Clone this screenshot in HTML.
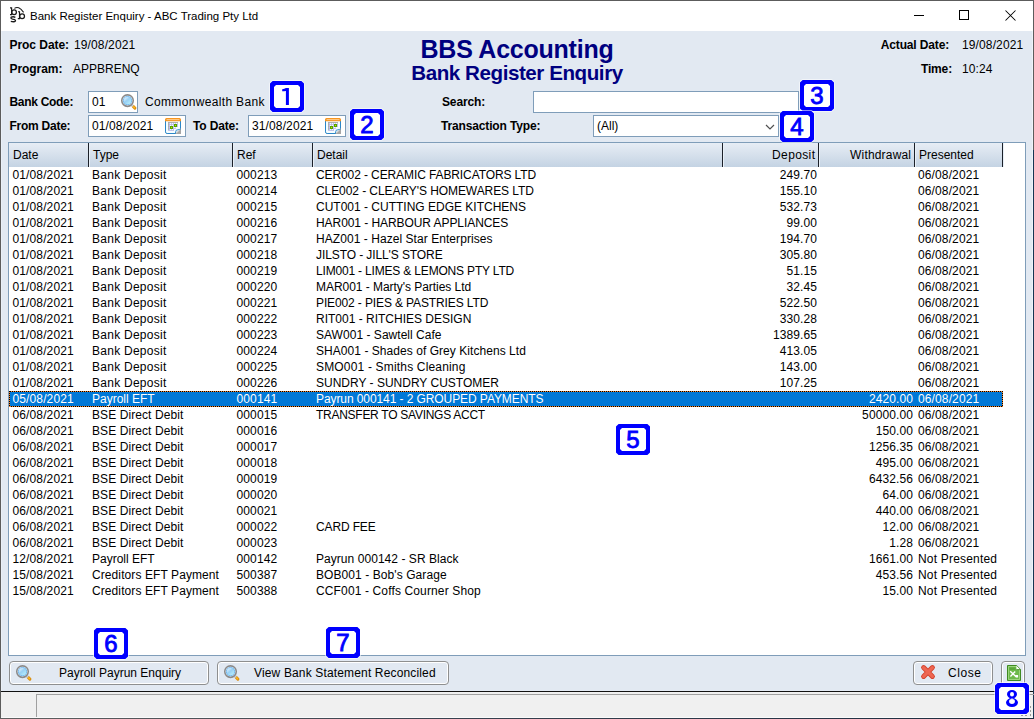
<!DOCTYPE html><html><head><meta charset="utf-8"><style>
*{margin:0;padding:0;box-sizing:border-box}
html,body{width:1034px;height:719px;overflow:hidden;background:#E2E9F2}
body{position:relative;font-family:"Liberation Sans",sans-serif;font-size:12px;color:#000}
.t{position:absolute;white-space:pre;line-height:16px;font-size:12px}
.b{font-weight:bold;letter-spacing:-0.15px}
.r{text-align:right}
.abs{position:absolute}
svg{display:block}
.badge{position:absolute;border:4px solid #0000F0;border-radius:4px;background:#fff;color:#0000F0;font-weight:bold;font-size:23px;line-height:23px;text-align:center;box-shadow:0 0 0 1px rgba(255,255,255,0.7)}
.inp{position:absolute;background:#fff;border:1px solid #7F9DB9}
.btn{position:absolute;border:1px solid #8E8F8F;border-radius:4px;box-shadow:inset 0 0 0 1px #fff;background:#E2E9F2}
</style></head><body>
<div class="abs" style="left:0;top:0;width:1034px;height:31px;background:#fff"></div>
<div class="abs" style="left:0;top:0;width:1034px;height:1px;background:#5C5C5C"></div>
<div class="abs" style="left:0;top:0;width:1px;height:719px;background:#5C5C5C"></div>
<div class="abs" style="left:1px;top:31px;width:1px;height:687px;background:#EAF0F8"></div>
<div class="abs" style="left:1032px;top:31px;width:1px;height:660px;background:#EEF3FA"></div>
<div class="abs" style="left:1033px;top:0;width:1px;height:150px;background:#5C5C5C"></div>
<div class="abs" style="left:1033px;top:150px;width:1px;height:569px;background:#163452"></div>
<svg class="abs" style="left:6px;top:4px" width="24" height="20" viewBox="0 0 24 20" fill="none" stroke="#1a1a1a"><path d="M4 3.9 H5.6 V10.6 H4" stroke-width="1.15"/><ellipse cx="8.1" cy="8.2" rx="2.3" ry="2.35" stroke-width="1.25"/><path d="M8.4 4.4 Q12.5 1.2 17.6 8.4" stroke-width="1.05"/><path d="M12 7.7 H13.5 V14.6 H11.8" stroke-width="1.15"/><ellipse cx="16.1" cy="12.2" rx="2.4" ry="2.35" stroke-width="1.25"/><path d="M9.4 13.3 Q7.2 12.2 5.2 13.2 Q4.3 14.6 6.6 15.1 Q9.7 15.6 9.5 16.8 Q8.6 18.3 4.8 17.4" stroke-width="1.3"/></svg>
<div class="t" style="left:30px;top:8px;font-size:11.5px;line-height:16px;color:#000">Bank Register Enquiry - ABC Trading Pty Ltd</div>
<div class="abs" style="left:914px;top:15px;width:10px;height:1px;background:#000"></div>
<div class="abs" style="left:959px;top:10px;width:10px;height:10px;border:1px solid #000"></div>
<svg class="abs" style="left:1005px;top:10px" width="11" height="11" viewBox="0 0 11 11"><path d="M0.5 0.5 L10.5 10.5 M10.5 0.5 L0.5 10.5" stroke="#000" stroke-width="1.05"/></svg>
<div class="t b" style="left:9.5px;top:37px;letter-spacing:-0.05px;">Proc Date:</div>
<div class="t" style="left:74px;top:37px;letter-spacing:0.12px;">19/08/2021</div>
<div class="t b" style="left:9.5px;top:61px;letter-spacing:-0.06px;">Program:</div>
<div class="t" style="left:73px;top:61px;">APPBRENQ</div>
<div class="t b" style="left:0;width:1034px;text-align:center;top:34.5px;font-size:25px;line-height:28px;letter-spacing:-0.24px;color:#000080">BBS Accounting</div>
<div class="t b" style="left:0;width:1034px;text-align:center;top:60.5px;font-size:20.6px;line-height:24px;letter-spacing:-0.45px;color:#000080">Bank Register Enquiry</div>
<div class="t b r" style="right:85px;top:37px;">Actual Date:</div>
<div class="t" style="left:962px;top:37px;letter-spacing:0.12px;">19/08/2021</div>
<div class="t b r" style="right:82px;top:61px;">Time:</div>
<div class="t" style="left:962px;top:61px;letter-spacing:0.12px;">10:24</div>
<div class="t b" style="left:9.5px;top:94px;letter-spacing:-0.3px;">Bank Code:</div>
<div class="inp" style="left:88px;top:91px;width:50px;height:22px"></div>
<div class="t" style="left:92px;top:94px;letter-spacing:0.12px;">01</div>
<div class="abs" style="left:120px;top:93px"><svg width="17" height="17" viewBox="0 0 17 17"><defs><linearGradient id="mg" x1="0.15" y1="0.1" x2="0.85" y2="0.9"><stop offset="0" stop-color="#e4f4ff"/><stop offset="0.45" stop-color="#98d0f4"/><stop offset="1" stop-color="#b8f0fc"/></linearGradient></defs><path d="M13.2 13.4 L14.9 15.1" stroke="#D98E12" stroke-width="2.9" stroke-linecap="round"/><path d="M13.5 13.7 L14.6 14.8" stroke="#FFB81C" stroke-width="1.3" stroke-linecap="round"/><path d="M11.6 11.8 L12.9 13.1" stroke="#C8D4E4" stroke-width="2.2"/><circle cx="7.5" cy="7.6" r="5.75" fill="#ffffff" stroke="#8A8A8A" stroke-width="1.6"/><circle cx="7.5" cy="7.6" r="4.1" fill="url(#mg)" stroke="#5DACEB" stroke-width="0.8"/></svg></div>
<div class="t" style="left:145px;top:94px;letter-spacing:0.34px;">Commonwealth Bank</div>
<div class="t b" style="left:9.5px;top:118px;letter-spacing:-0.25px;">From Date:</div>
<div class="inp" style="left:88px;top:115px;width:98px;height:22px"></div>
<div class="t" style="left:92px;top:118px;letter-spacing:0.12px;">01/08/2021</div>
<div class="abs" style="left:164px;top:117px"><svg width="18" height="18" viewBox="0 0 18 18"><rect x="1.5" y="2" width="15" height="14.5" rx="1.6" fill="#F4FDFF" stroke="#2A86C8" stroke-width="1"/><path d="M1 4.2 V2.6 Q1 1 2.6 1 H15.4 Q17 1 17 2.6 V4.2 Z" fill="#F8951E"/><rect x="2.6" y="2.3" width="12.8" height="0.8" fill="#FFDDB0"/><g fill="#B4ACE0"><rect x="5.3" y="5.6" width="0.7" height="7.6"/><rect x="7.3" y="5.6" width="0.7" height="7.6"/><rect x="9.3" y="5.6" width="0.7" height="7.6"/><rect x="11.3" y="5.6" width="0.7" height="5"/><rect x="13.3" y="5.6" width="0.7" height="4"/><rect x="4" y="7" width="10" height="0.7"/><rect x="4" y="9" width="10" height="0.7"/><rect x="4" y="11" width="8" height="0.7"/><rect x="4" y="13" width="6" height="0.7"/></g><rect x="4" y="5" width="10" height="0.9" fill="#A8A8A8"/><rect x="4" y="5" width="0.9" height="8" fill="#A8A8A8"/><rect x="10" y="7" width="3" height="3" fill="#58A000"/><rect x="6" y="9" width="3" height="3" fill="#58A000"/><rect x="11" y="8" width="1" height="1" fill="#C0F000"/><rect x="7" y="10" width="1" height="1" fill="#C0F000"/><path d="M11 17 L17 11 V17 Z" fill="#A6A6A6"/><path d="M11.2 16.6 L12.2 13.2 L16.6 12.2" fill="none" stroke="#2A86C8" stroke-width="0.9"/><path d="M12.6 15.8 L15.8 12.8" stroke="#e8e8e8" stroke-width="0.7"/></svg></div>
<div class="t b" style="left:193px;top:118px;">To Date:</div>
<div class="inp" style="left:248px;top:115px;width:98px;height:22px"></div>
<div class="t" style="left:252px;top:118px;letter-spacing:0.12px;">31/08/2021</div>
<div class="abs" style="left:324px;top:117px"><svg width="18" height="18" viewBox="0 0 18 18"><rect x="1.5" y="2" width="15" height="14.5" rx="1.6" fill="#F4FDFF" stroke="#2A86C8" stroke-width="1"/><path d="M1 4.2 V2.6 Q1 1 2.6 1 H15.4 Q17 1 17 2.6 V4.2 Z" fill="#F8951E"/><rect x="2.6" y="2.3" width="12.8" height="0.8" fill="#FFDDB0"/><g fill="#B4ACE0"><rect x="5.3" y="5.6" width="0.7" height="7.6"/><rect x="7.3" y="5.6" width="0.7" height="7.6"/><rect x="9.3" y="5.6" width="0.7" height="7.6"/><rect x="11.3" y="5.6" width="0.7" height="5"/><rect x="13.3" y="5.6" width="0.7" height="4"/><rect x="4" y="7" width="10" height="0.7"/><rect x="4" y="9" width="10" height="0.7"/><rect x="4" y="11" width="8" height="0.7"/><rect x="4" y="13" width="6" height="0.7"/></g><rect x="4" y="5" width="10" height="0.9" fill="#A8A8A8"/><rect x="4" y="5" width="0.9" height="8" fill="#A8A8A8"/><rect x="10" y="7" width="3" height="3" fill="#58A000"/><rect x="6" y="9" width="3" height="3" fill="#58A000"/><rect x="11" y="8" width="1" height="1" fill="#C0F000"/><rect x="7" y="10" width="1" height="1" fill="#C0F000"/><path d="M11 17 L17 11 V17 Z" fill="#A6A6A6"/><path d="M11.2 16.6 L12.2 13.2 L16.6 12.2" fill="none" stroke="#2A86C8" stroke-width="0.9"/><path d="M12.6 15.8 L15.8 12.8" stroke="#e8e8e8" stroke-width="0.7"/></svg></div>
<div class="t b" style="left:442px;top:94px;">Search:</div>
<div class="inp" style="left:533px;top:91px;width:266px;height:22px"></div>
<div class="t b" style="left:441px;top:118px;">Transaction Type:</div>
<div class="inp" style="left:593px;top:115px;width:186px;height:22px"></div>
<div class="t" style="left:597px;top:118px;">(All)</div>
<div class="abs" style="left:765px;top:124px"><svg width="10" height="6" viewBox="0 0 10 6"><path d="M1 1 L5 5 L9 1" fill="none" stroke="#505050" stroke-width="1.2"/></svg></div>
<div class="abs" style="left:8px;top:142px;width:1018px;height:514px;background:#fff;border:1px solid #7F9DB9"></div>
<div class="abs" style="left:9px;top:143px;width:993px;height:24px;background:linear-gradient(#E7EDF5,#C4D3E3)"></div>
<div class="abs" style="left:88px;top:143px;width:2px;height:24px;background:linear-gradient(90deg,#1B2029 50%,#E8F0F8 50%)"></div>
<div class="abs" style="left:232px;top:143px;width:2px;height:24px;background:linear-gradient(90deg,#1B2029 50%,#E8F0F8 50%)"></div>
<div class="abs" style="left:312px;top:143px;width:2px;height:24px;background:linear-gradient(90deg,#1B2029 50%,#E8F0F8 50%)"></div>
<div class="abs" style="left:722px;top:143px;width:2px;height:24px;background:linear-gradient(90deg,#1B2029 50%,#E8F0F8 50%)"></div>
<div class="abs" style="left:818px;top:143px;width:2px;height:24px;background:linear-gradient(90deg,#1B2029 50%,#E8F0F8 50%)"></div>
<div class="abs" style="left:914px;top:143px;width:2px;height:24px;background:linear-gradient(90deg,#1B2029 50%,#E8F0F8 50%)"></div>
<div class="abs" style="left:1002px;top:143px;width:2px;height:24px;background:linear-gradient(90deg,#1B2029 50%,#E8F0F8 50%)"></div>
<div class="t" style="left:13px;top:147px;">Date</div>
<div class="t" style="left:93px;top:147px;">Type</div>
<div class="t" style="left:237px;top:147px;">Ref</div>
<div class="t" style="left:317px;top:147px;">Detail</div>
<div class="t r" style="right:218.62px;top:147px;letter-spacing:0.38px;">Deposit</div>
<div class="t r" style="right:122.82000000000005px;top:147px;letter-spacing:0.18px;">Withdrawal</div>
<div class="t" style="left:919px;top:147px;">Presented</div>
<div class="abs" style="left:9px;top:391px;width:994px;height:16px;background:#0078D7"></div>
<div class="abs" style="left:9px;top:391px;width:994px;height:1px;background:repeating-linear-gradient(90deg,#000 0 1px,#F8872A 1px 2px);background-position:1px 0"></div>
<div class="abs" style="left:9px;top:406px;width:994px;height:1px;background:repeating-linear-gradient(90deg,#000 0 1px,#F8872A 1px 2px)"></div>
<div class="abs" style="left:9px;top:391px;width:1px;height:16px;background:repeating-linear-gradient(180deg,#000 0 1px,#F8872A 1px 2px)"></div>
<div class="abs" style="left:1002px;top:391px;width:1px;height:16px;background:repeating-linear-gradient(180deg,#000 0 1px,#F8872A 1px 2px)"></div>
<div class="t" style="left:12.5px;top:167px;letter-spacing:0.12px;">01/08/2021</div>
<div class="t" style="left:92px;top:167px;letter-spacing:0.26px;">Bank Deposit</div>
<div class="t" style="left:236.5px;top:167px;letter-spacing:0.12px;">000213</div>
<div class="t" style="left:316px;top:167px;letter-spacing:-0.103px;">CER002 - CERAMIC FABRICATORS LTD</div>
<div class="t r" style="right:216.88px;top:167px;letter-spacing:0.12px;">249.70</div>
<div class="t" style="left:918px;top:167px;letter-spacing:0.12px;">06/08/2021</div>
<div class="t" style="left:12.5px;top:183px;letter-spacing:0.12px;">01/08/2021</div>
<div class="t" style="left:92px;top:183px;letter-spacing:0.26px;">Bank Deposit</div>
<div class="t" style="left:236.5px;top:183px;letter-spacing:0.12px;">000214</div>
<div class="t" style="left:316px;top:183px;letter-spacing:-0.073px;">CLE002 - CLEARY'S HOMEWARES LTD</div>
<div class="t r" style="right:216.88px;top:183px;letter-spacing:0.12px;">155.10</div>
<div class="t" style="left:918px;top:183px;letter-spacing:0.12px;">06/08/2021</div>
<div class="t" style="left:12.5px;top:199px;letter-spacing:0.12px;">01/08/2021</div>
<div class="t" style="left:92px;top:199px;letter-spacing:0.26px;">Bank Deposit</div>
<div class="t" style="left:236.5px;top:199px;letter-spacing:0.12px;">000215</div>
<div class="t" style="left:316px;top:199px;letter-spacing:0.0px;">CUT001 - CUTTING EDGE KITCHENS</div>
<div class="t r" style="right:216.88px;top:199px;letter-spacing:0.12px;">532.73</div>
<div class="t" style="left:918px;top:199px;letter-spacing:0.12px;">06/08/2021</div>
<div class="t" style="left:12.5px;top:215px;letter-spacing:0.12px;">01/08/2021</div>
<div class="t" style="left:92px;top:215px;letter-spacing:0.26px;">Bank Deposit</div>
<div class="t" style="left:236.5px;top:215px;letter-spacing:0.12px;">000216</div>
<div class="t" style="left:316px;top:215px;letter-spacing:-0.069px;">HAR001 - HARBOUR APPLIANCES</div>
<div class="t r" style="right:216.88px;top:215px;letter-spacing:0.12px;">99.00</div>
<div class="t" style="left:918px;top:215px;letter-spacing:0.12px;">06/08/2021</div>
<div class="t" style="left:12.5px;top:231px;letter-spacing:0.12px;">01/08/2021</div>
<div class="t" style="left:92px;top:231px;letter-spacing:0.26px;">Bank Deposit</div>
<div class="t" style="left:236.5px;top:231px;letter-spacing:0.12px;">000217</div>
<div class="t" style="left:316px;top:231px;letter-spacing:0.057px;">HAZ001 - Hazel Star Enterprises</div>
<div class="t r" style="right:216.88px;top:231px;letter-spacing:0.12px;">194.70</div>
<div class="t" style="left:918px;top:231px;letter-spacing:0.12px;">06/08/2021</div>
<div class="t" style="left:12.5px;top:247px;letter-spacing:0.12px;">01/08/2021</div>
<div class="t" style="left:92px;top:247px;letter-spacing:0.26px;">Bank Deposit</div>
<div class="t" style="left:236.5px;top:247px;letter-spacing:0.12px;">000218</div>
<div class="t" style="left:316px;top:247px;letter-spacing:-0.095px;">JILSTO - JILL'S STORE</div>
<div class="t r" style="right:216.88px;top:247px;letter-spacing:0.12px;">305.80</div>
<div class="t" style="left:918px;top:247px;letter-spacing:0.12px;">06/08/2021</div>
<div class="t" style="left:12.5px;top:263px;letter-spacing:0.12px;">01/08/2021</div>
<div class="t" style="left:92px;top:263px;letter-spacing:0.26px;">Bank Deposit</div>
<div class="t" style="left:236.5px;top:263px;letter-spacing:0.12px;">000219</div>
<div class="t" style="left:316px;top:263px;letter-spacing:-0.18px;">LIM001 - LIMES &amp; LEMONS PTY LTD</div>
<div class="t r" style="right:216.88px;top:263px;letter-spacing:0.12px;">51.15</div>
<div class="t" style="left:918px;top:263px;letter-spacing:0.12px;">06/08/2021</div>
<div class="t" style="left:12.5px;top:279px;letter-spacing:0.12px;">01/08/2021</div>
<div class="t" style="left:92px;top:279px;letter-spacing:0.26px;">Bank Deposit</div>
<div class="t" style="left:236.5px;top:279px;letter-spacing:0.12px;">000220</div>
<div class="t" style="left:316px;top:279px;letter-spacing:-0.044px;">MAR001 - Marty's Parties Ltd</div>
<div class="t r" style="right:216.88px;top:279px;letter-spacing:0.12px;">32.45</div>
<div class="t" style="left:918px;top:279px;letter-spacing:0.12px;">06/08/2021</div>
<div class="t" style="left:12.5px;top:295px;letter-spacing:0.12px;">01/08/2021</div>
<div class="t" style="left:92px;top:295px;letter-spacing:0.26px;">Bank Deposit</div>
<div class="t" style="left:236.5px;top:295px;letter-spacing:0.12px;">000221</div>
<div class="t" style="left:316px;top:295px;letter-spacing:-0.122px;">PIE002 - PIES &amp; PASTRIES LTD</div>
<div class="t r" style="right:216.88px;top:295px;letter-spacing:0.12px;">522.50</div>
<div class="t" style="left:918px;top:295px;letter-spacing:0.12px;">06/08/2021</div>
<div class="t" style="left:12.5px;top:311px;letter-spacing:0.12px;">01/08/2021</div>
<div class="t" style="left:92px;top:311px;letter-spacing:0.26px;">Bank Deposit</div>
<div class="t" style="left:236.5px;top:311px;letter-spacing:0.12px;">000222</div>
<div class="t" style="left:316px;top:311px;letter-spacing:0.0px;">RIT001 - RITCHIES DESIGN</div>
<div class="t r" style="right:216.88px;top:311px;letter-spacing:0.12px;">330.28</div>
<div class="t" style="left:918px;top:311px;letter-spacing:0.12px;">06/08/2021</div>
<div class="t" style="left:12.5px;top:327px;letter-spacing:0.12px;">01/08/2021</div>
<div class="t" style="left:92px;top:327px;letter-spacing:0.26px;">Bank Deposit</div>
<div class="t" style="left:236.5px;top:327px;letter-spacing:0.12px;">000223</div>
<div class="t" style="left:316px;top:327px;letter-spacing:0.03px;">SAW001 - Sawtell Cafe</div>
<div class="t r" style="right:216.88px;top:327px;letter-spacing:0.12px;">1389.65</div>
<div class="t" style="left:918px;top:327px;letter-spacing:0.12px;">06/08/2021</div>
<div class="t" style="left:12.5px;top:343px;letter-spacing:0.12px;">01/08/2021</div>
<div class="t" style="left:92px;top:343px;letter-spacing:0.26px;">Bank Deposit</div>
<div class="t" style="left:236.5px;top:343px;letter-spacing:0.12px;">000224</div>
<div class="t" style="left:316px;top:343px;letter-spacing:0.05px;">SHA001 - Shades of Grey Kitchens Ltd</div>
<div class="t r" style="right:216.88px;top:343px;letter-spacing:0.12px;">413.05</div>
<div class="t" style="left:918px;top:343px;letter-spacing:0.12px;">06/08/2021</div>
<div class="t" style="left:12.5px;top:359px;letter-spacing:0.12px;">01/08/2021</div>
<div class="t" style="left:92px;top:359px;letter-spacing:0.26px;">Bank Deposit</div>
<div class="t" style="left:236.5px;top:359px;letter-spacing:0.12px;">000225</div>
<div class="t" style="left:316px;top:359px;letter-spacing:0.174px;">SMO001 - Smiths Cleaning</div>
<div class="t r" style="right:216.88px;top:359px;letter-spacing:0.12px;">143.00</div>
<div class="t" style="left:918px;top:359px;letter-spacing:0.12px;">06/08/2021</div>
<div class="t" style="left:12.5px;top:375px;letter-spacing:0.12px;">01/08/2021</div>
<div class="t" style="left:92px;top:375px;letter-spacing:0.26px;">Bank Deposit</div>
<div class="t" style="left:236.5px;top:375px;letter-spacing:0.12px;">000226</div>
<div class="t" style="left:316px;top:375px;letter-spacing:0.0px;">SUNDRY - SUNDRY CUSTOMER</div>
<div class="t r" style="right:216.88px;top:375px;letter-spacing:0.12px;">107.25</div>
<div class="t" style="left:918px;top:375px;letter-spacing:0.12px;">06/08/2021</div>
<div class="t" style="left:12.5px;top:391px;letter-spacing:0.12px;color:#fff;">05/08/2021</div>
<div class="t" style="left:92px;top:391px;color:#fff;">Payroll EFT</div>
<div class="t" style="left:236.5px;top:391px;letter-spacing:0.12px;color:#fff;">000141</div>
<div class="t" style="left:316px;top:391px;letter-spacing:-0.085px;color:#fff;">Payrun 000141 - 2 GROUPED PAYMENTS</div>
<div class="t r" style="right:120.88px;top:391px;letter-spacing:0.12px;color:#fff;">2420.00</div>
<div class="t" style="left:918px;top:391px;letter-spacing:0.12px;color:#fff;">06/08/2021</div>
<div class="t" style="left:12.5px;top:407px;letter-spacing:0.12px;">06/08/2021</div>
<div class="t" style="left:92px;top:407px;letter-spacing:0.08px;">BSE Direct Debit</div>
<div class="t" style="left:236.5px;top:407px;letter-spacing:0.12px;">000015</div>
<div class="t" style="left:316px;top:407px;letter-spacing:-0.27px;">TRANSFER TO SAVINGS ACCT</div>
<div class="t r" style="right:120.88px;top:407px;letter-spacing:0.12px;">50000.00</div>
<div class="t" style="left:918px;top:407px;letter-spacing:0.12px;">06/08/2021</div>
<div class="t" style="left:12.5px;top:423px;letter-spacing:0.12px;">06/08/2021</div>
<div class="t" style="left:92px;top:423px;letter-spacing:0.08px;">BSE Direct Debit</div>
<div class="t" style="left:236.5px;top:423px;letter-spacing:0.12px;">000016</div>
<div class="t r" style="right:120.88px;top:423px;letter-spacing:0.12px;">150.00</div>
<div class="t" style="left:918px;top:423px;letter-spacing:0.12px;">06/08/2021</div>
<div class="t" style="left:12.5px;top:439px;letter-spacing:0.12px;">06/08/2021</div>
<div class="t" style="left:92px;top:439px;letter-spacing:0.08px;">BSE Direct Debit</div>
<div class="t" style="left:236.5px;top:439px;letter-spacing:0.12px;">000017</div>
<div class="t r" style="right:120.88px;top:439px;letter-spacing:0.12px;">1256.35</div>
<div class="t" style="left:918px;top:439px;letter-spacing:0.12px;">06/08/2021</div>
<div class="t" style="left:12.5px;top:455px;letter-spacing:0.12px;">06/08/2021</div>
<div class="t" style="left:92px;top:455px;letter-spacing:0.08px;">BSE Direct Debit</div>
<div class="t" style="left:236.5px;top:455px;letter-spacing:0.12px;">000018</div>
<div class="t r" style="right:120.88px;top:455px;letter-spacing:0.12px;">495.00</div>
<div class="t" style="left:918px;top:455px;letter-spacing:0.12px;">06/08/2021</div>
<div class="t" style="left:12.5px;top:471px;letter-spacing:0.12px;">06/08/2021</div>
<div class="t" style="left:92px;top:471px;letter-spacing:0.08px;">BSE Direct Debit</div>
<div class="t" style="left:236.5px;top:471px;letter-spacing:0.12px;">000019</div>
<div class="t r" style="right:120.88px;top:471px;letter-spacing:0.12px;">6432.56</div>
<div class="t" style="left:918px;top:471px;letter-spacing:0.12px;">06/08/2021</div>
<div class="t" style="left:12.5px;top:487px;letter-spacing:0.12px;">06/08/2021</div>
<div class="t" style="left:92px;top:487px;letter-spacing:0.08px;">BSE Direct Debit</div>
<div class="t" style="left:236.5px;top:487px;letter-spacing:0.12px;">000020</div>
<div class="t r" style="right:120.88px;top:487px;letter-spacing:0.12px;">64.00</div>
<div class="t" style="left:918px;top:487px;letter-spacing:0.12px;">06/08/2021</div>
<div class="t" style="left:12.5px;top:503px;letter-spacing:0.12px;">06/08/2021</div>
<div class="t" style="left:92px;top:503px;letter-spacing:0.08px;">BSE Direct Debit</div>
<div class="t" style="left:236.5px;top:503px;letter-spacing:0.12px;">000021</div>
<div class="t r" style="right:120.88px;top:503px;letter-spacing:0.12px;">440.00</div>
<div class="t" style="left:918px;top:503px;letter-spacing:0.12px;">06/08/2021</div>
<div class="t" style="left:12.5px;top:519px;letter-spacing:0.12px;">06/08/2021</div>
<div class="t" style="left:92px;top:519px;letter-spacing:0.08px;">BSE Direct Debit</div>
<div class="t" style="left:236.5px;top:519px;letter-spacing:0.12px;">000022</div>
<div class="t" style="left:316px;top:519px;letter-spacing:-0.14px;">CARD FEE</div>
<div class="t r" style="right:120.88px;top:519px;letter-spacing:0.12px;">12.00</div>
<div class="t" style="left:918px;top:519px;letter-spacing:0.12px;">06/08/2021</div>
<div class="t" style="left:12.5px;top:535px;letter-spacing:0.12px;">06/08/2021</div>
<div class="t" style="left:92px;top:535px;letter-spacing:0.08px;">BSE Direct Debit</div>
<div class="t" style="left:236.5px;top:535px;letter-spacing:0.12px;">000023</div>
<div class="t r" style="right:120.88px;top:535px;letter-spacing:0.12px;">1.28</div>
<div class="t" style="left:918px;top:535px;letter-spacing:0.12px;">06/08/2021</div>
<div class="t" style="left:12.5px;top:551px;letter-spacing:0.12px;">12/08/2021</div>
<div class="t" style="left:92px;top:551px;">Payroll EFT</div>
<div class="t" style="left:236.5px;top:551px;letter-spacing:0.12px;">000142</div>
<div class="t" style="left:316px;top:551px;letter-spacing:0.05px;">Payrun 000142 - SR Black</div>
<div class="t r" style="right:120.88px;top:551px;letter-spacing:0.12px;">1661.00</div>
<div class="t" style="left:918px;top:551px;letter-spacing:0.19px;">Not Presented</div>
<div class="t" style="left:12.5px;top:567px;letter-spacing:0.12px;">15/08/2021</div>
<div class="t" style="left:92px;top:567px;letter-spacing:0.09px;">Creditors EFT Payment</div>
<div class="t" style="left:236.5px;top:567px;letter-spacing:0.12px;">500387</div>
<div class="t" style="left:316px;top:567px;letter-spacing:0.08px;">BOB001 - Bob's Garage</div>
<div class="t r" style="right:120.88px;top:567px;letter-spacing:0.12px;">453.56</div>
<div class="t" style="left:918px;top:567px;letter-spacing:0.19px;">Not Presented</div>
<div class="t" style="left:12.5px;top:583px;letter-spacing:0.12px;">15/08/2021</div>
<div class="t" style="left:92px;top:583px;letter-spacing:0.09px;">Creditors EFT Payment</div>
<div class="t" style="left:236.5px;top:583px;letter-spacing:0.12px;">500388</div>
<div class="t" style="left:316px;top:583px;letter-spacing:0.135px;">CCF001 - Coffs Courner Shop</div>
<div class="t r" style="right:120.88px;top:583px;letter-spacing:0.12px;">15.00</div>
<div class="t" style="left:918px;top:583px;letter-spacing:0.19px;">Not Presented</div>
<div class="btn" style="left:9px;top:661px;width:200px;height:24px"></div>
<div class="abs" style="left:15px;top:664px"><svg width="17" height="17" viewBox="0 0 17 17"><defs><linearGradient id="mg" x1="0.15" y1="0.1" x2="0.85" y2="0.9"><stop offset="0" stop-color="#e4f4ff"/><stop offset="0.45" stop-color="#98d0f4"/><stop offset="1" stop-color="#b8f0fc"/></linearGradient></defs><path d="M13.2 13.4 L14.9 15.1" stroke="#D98E12" stroke-width="2.9" stroke-linecap="round"/><path d="M13.5 13.7 L14.6 14.8" stroke="#FFB81C" stroke-width="1.3" stroke-linecap="round"/><path d="M11.6 11.8 L12.9 13.1" stroke="#C8D4E4" stroke-width="2.2"/><circle cx="7.5" cy="7.6" r="5.75" fill="#ffffff" stroke="#8A8A8A" stroke-width="1.6"/><circle cx="7.5" cy="7.6" r="4.1" fill="url(#mg)" stroke="#5DACEB" stroke-width="0.8"/></svg></div>
<div class="t" style="left:59px;top:665px;">Payroll Payrun Enquiry</div>
<div class="btn" style="left:217px;top:661px;width:232px;height:24px"></div>
<div class="abs" style="left:223px;top:664px"><svg width="17" height="17" viewBox="0 0 17 17"><defs><linearGradient id="mg" x1="0.15" y1="0.1" x2="0.85" y2="0.9"><stop offset="0" stop-color="#e4f4ff"/><stop offset="0.45" stop-color="#98d0f4"/><stop offset="1" stop-color="#b8f0fc"/></linearGradient></defs><path d="M13.2 13.4 L14.9 15.1" stroke="#D98E12" stroke-width="2.9" stroke-linecap="round"/><path d="M13.5 13.7 L14.6 14.8" stroke="#FFB81C" stroke-width="1.3" stroke-linecap="round"/><path d="M11.6 11.8 L12.9 13.1" stroke="#C8D4E4" stroke-width="2.2"/><circle cx="7.5" cy="7.6" r="5.75" fill="#ffffff" stroke="#8A8A8A" stroke-width="1.6"/><circle cx="7.5" cy="7.6" r="4.1" fill="url(#mg)" stroke="#5DACEB" stroke-width="0.8"/></svg></div>
<div class="t" style="left:254px;top:665px;letter-spacing:0.15px;">View Bank Statement Reconciled</div>
<div class="btn" style="left:913px;top:661px;width:80px;height:24px"></div>
<svg class="abs" style="left:920px;top:664px" width="16" height="16" viewBox="0 0 16 16"><path d="M3.6 3.6 L12.4 12.4 M12.4 3.6 L3.6 12.4" stroke="#D3432D" stroke-width="5" stroke-linecap="round"/><path d="M3.6 3.6 L12.4 12.4 M12.4 3.6 L3.6 12.4" stroke="#EE6652" stroke-width="3.2" stroke-linecap="round"/></svg>
<div class="t" style="left:948px;top:665px;letter-spacing:0.55px;">Close</div>
<div class="btn" style="left:1001px;top:661px;width:24px;height:26px"></div>
<svg class="abs" style="left:1007px;top:665px" width="14" height="16" viewBox="0 0 14 16"><path d="M0.5 0.5 H9.6 L13.5 4.4 V15.5 H0.5 Z" fill="#6DB94B" stroke="#3F8A22"/><path d="M1.5 1.5 H9.2 L12.5 4.8 V14.5 H1.5 Z" fill="none" stroke="#A6DA88" stroke-width="0.8"/><rect x="2.5" y="2.5" width="6" height="2.5" fill="#5AA83A"/><path d="M9.4 0.8 V4.6 H13.2 Z" fill="#ffffff"/><path d="M9.4 4.6 L13.2 4.6" stroke="#3F8A22" stroke-width="0.8"/><path d="M3.2 6.3 L9.6 12.2 M3.4 11.6 L8.2 6.6 M8.6 10.6 H10.4 V12.6" stroke="#ffffff" stroke-width="1.4" fill="none"/></svg>
<div class="abs" style="left:1px;top:691px;width:1032px;height:1px;background:#111"></div>
<div class="abs" style="left:1px;top:692px;width:1032px;height:26px;background:#F0F0F0"></div>
<div class="abs" style="left:36px;top:694px;width:1000px;height:24px;border-left:1px solid #A0A0A0;border-top:1px solid #A0A0A0"></div>
<div class="abs" style="left:1px;top:717px;width:1032px;height:1px;background:#FAFAFA"></div>
<div class="abs" style="left:0;top:718px;width:1034px;height:1px;background:linear-gradient(90deg,#606060,#3a4350 40%,#1c2c40)"></div>
<div class="abs" style="left:1030px;top:706px;width:1px;height:2px;background:#9A9A9A"></div>
<div class="abs" style="left:1030px;top:710px;width:1px;height:2px;background:#9A9A9A"></div>
<div class="abs" style="left:1030px;top:714px;width:1px;height:2px;background:#9A9A9A"></div>
<div class="abs" style="left:1021px;top:715px;width:2px;height:1px;background:#9A9A9A"></div>
<div class="abs" style="left:1025px;top:715px;width:2px;height:1px;background:#9A9A9A"></div>
<svg class="abs" style="left:269px;top:80px" width="36" height="33" viewBox="0 0 36 33"><path d="M3.2 0 H32.8 L36 3.2 V29.8 L32.8 33 H3.2 L0 29.8 V3.2 Z" fill="#ffffff" fill-opacity="0.55"/><path d="M3.6 1 H32.4 L35 3.6 V29.4 L32.4 32 H3.6 L1 29.4 V3.6 Z" fill="#0000FF"/><path d="M7 5 H29 L31 7 V26 L29 28 H7 L5 26 V7 Z" fill="#ffffff"/><path d="M13.2 9.3 Q15.6 8.9 16.9 8 H19.9 V25 H16.9 V10.9 Q15.2 11.1 13.2 11.2 Z" fill="#0000FF"/></svg>
<svg class="abs" style="left:349px;top:108px" width="36" height="33" viewBox="0 0 36 33"><path d="M3.2 0 H32.8 L36 3.2 V29.8 L32.8 33 H3.2 L0 29.8 V3.2 Z" fill="#ffffff" fill-opacity="0.55"/><path d="M3.6 1 H32.4 L35 3.6 V29.4 L32.4 32 H3.6 L1 29.4 V3.6 Z" fill="#0000FF"/><path d="M7 5 H29 L31 7 V26 L29 28 H7 L5 26 V7 Z" fill="#ffffff"/><text x="18.0" y="25" text-anchor="middle" font-family="Liberation Sans" font-size="24" fill="#0000FF" stroke="#0000FF" stroke-width="0.85">2</text></svg>
<svg class="abs" style="left:799px;top:79px" width="36" height="33" viewBox="0 0 36 33"><path d="M3.2 0 H32.8 L36 3.2 V29.8 L32.8 33 H3.2 L0 29.8 V3.2 Z" fill="#ffffff" fill-opacity="0.55"/><path d="M3.6 1 H32.4 L35 3.6 V29.4 L32.4 32 H3.6 L1 29.4 V3.6 Z" fill="#0000FF"/><path d="M7 5 H29 L31 7 V26 L29 28 H7 L5 26 V7 Z" fill="#ffffff"/><text x="18.0" y="25" text-anchor="middle" font-family="Liberation Sans" font-size="24" fill="#0000FF" stroke="#0000FF" stroke-width="0.85">3</text></svg>
<svg class="abs" style="left:779px;top:110px" width="36" height="33" viewBox="0 0 36 33"><path d="M3.2 0 H32.8 L36 3.2 V29.8 L32.8 33 H3.2 L0 29.8 V3.2 Z" fill="#ffffff" fill-opacity="0.55"/><path d="M3.6 1 H32.4 L35 3.6 V29.4 L32.4 32 H3.6 L1 29.4 V3.6 Z" fill="#0000FF"/><path d="M7 5 H29 L31 7 V26 L29 28 H7 L5 26 V7 Z" fill="#ffffff"/><text x="18.0" y="25" text-anchor="middle" font-family="Liberation Sans" font-size="24" fill="#0000FF" stroke="#0000FF" stroke-width="0.85">4</text></svg>
<svg class="abs" style="left:615px;top:423px" width="36" height="33" viewBox="0 0 36 33"><path d="M3.2 0 H32.8 L36 3.2 V29.8 L32.8 33 H3.2 L0 29.8 V3.2 Z" fill="#ffffff" fill-opacity="0.55"/><path d="M3.6 1 H32.4 L35 3.6 V29.4 L32.4 32 H3.6 L1 29.4 V3.6 Z" fill="#0000FF"/><path d="M7 5 H29 L31 7 V26 L29 28 H7 L5 26 V7 Z" fill="#ffffff"/><text x="18.0" y="25" text-anchor="middle" font-family="Liberation Sans" font-size="24" fill="#0000FF" stroke="#0000FF" stroke-width="0.85">5</text></svg>
<svg class="abs" style="left:93px;top:627px" width="36" height="33" viewBox="0 0 36 33"><path d="M3.2 0 H32.8 L36 3.2 V29.8 L32.8 33 H3.2 L0 29.8 V3.2 Z" fill="#ffffff" fill-opacity="0.55"/><path d="M3.6 1 H32.4 L35 3.6 V29.4 L32.4 32 H3.6 L1 29.4 V3.6 Z" fill="#0000FF"/><path d="M7 5 H29 L31 7 V26 L29 28 H7 L5 26 V7 Z" fill="#ffffff"/><text x="18.0" y="25" text-anchor="middle" font-family="Liberation Sans" font-size="24" fill="#0000FF" stroke="#0000FF" stroke-width="0.85">6</text></svg>
<svg class="abs" style="left:325px;top:626px" width="36" height="33" viewBox="0 0 36 33"><path d="M3.2 0 H32.8 L36 3.2 V29.8 L32.8 33 H3.2 L0 29.8 V3.2 Z" fill="#ffffff" fill-opacity="0.55"/><path d="M3.6 1 H32.4 L35 3.6 V29.4 L32.4 32 H3.6 L1 29.4 V3.6 Z" fill="#0000FF"/><path d="M7 5 H29 L31 7 V26 L29 28 H7 L5 26 V7 Z" fill="#ffffff"/><text x="18.0" y="25" text-anchor="middle" font-family="Liberation Sans" font-size="24" fill="#0000FF" stroke="#0000FF" stroke-width="0.85">7</text></svg>
<svg class="abs" style="left:994px;top:682px" width="36" height="33" viewBox="0 0 36 33"><path d="M3.2 0 H32.8 L36 3.2 V29.8 L32.8 33 H3.2 L0 29.8 V3.2 Z" fill="#ffffff" fill-opacity="0.55"/><path d="M3.6 1 H32.4 L35 3.6 V29.4 L32.4 32 H3.6 L1 29.4 V3.6 Z" fill="#0000FF"/><path d="M7 5 H29 L31 7 V26 L29 28 H7 L5 26 V7 Z" fill="#ffffff"/><path d="M13 12.2 a5 4.2 0 1 0 10 0 a5 4.2 0 1 0 -10 0 Z M16 12.25 a2 2.2 0 1 0 4 0 a2 2.2 0 1 0 -4 0 Z M12 20.6 a6 4.5 0 1 0 12 0 a6 4.5 0 1 0 -12 0 Z M15.1 19.5 a2.9 2.4 0 1 0 5.8 0 a2.9 2.4 0 1 0 -5.8 0 Z " fill="#0000FF" fill-rule="evenodd"/></svg>
</body></html>
